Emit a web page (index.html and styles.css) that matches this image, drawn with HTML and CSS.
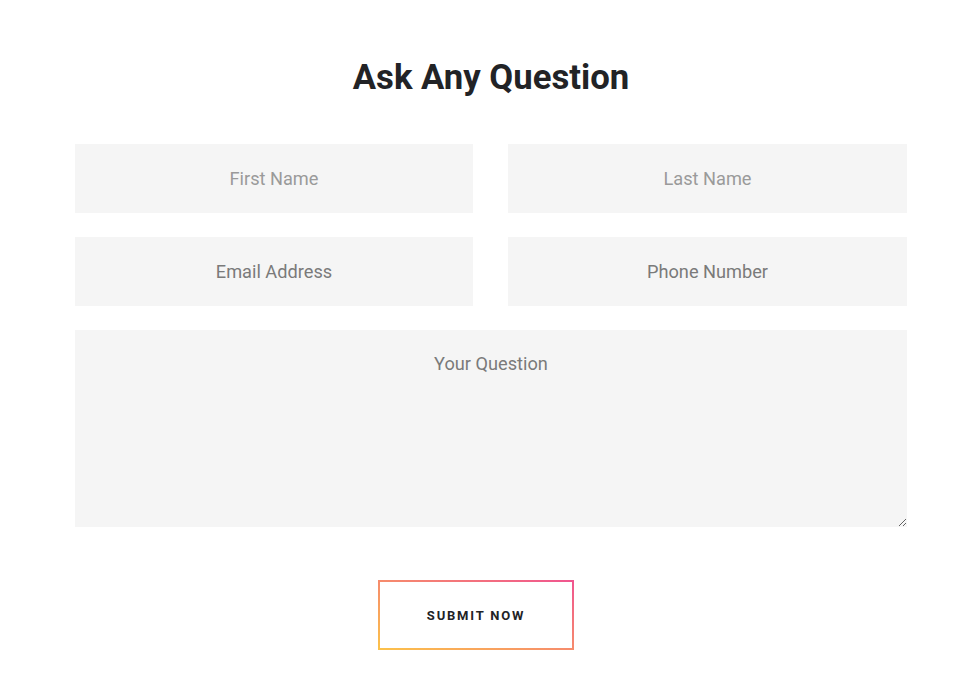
FILE: index.html
```html
<!DOCTYPE html>
<html>
<head>
<meta charset="utf-8">
<link rel="stylesheet" href="styles.css">
</head>
<body>
<section class="contact">
  <h2 class="title">Ask Any Question</h2>
  <form class="form">
    <div class="row">
      <input class="field light" type="text" placeholder="First Name">
      <input class="field light" type="text" placeholder="Last Name">
    </div>
    <div class="row">
      <input class="field" type="email" placeholder="Email Address">
      <input class="field" type="tel" placeholder="Phone Number">
    </div>
    <textarea class="field area" placeholder="Your Question"></textarea>
    <div class="actions">
      <button class="submit" type="button">SUBMIT NOW</button>
    </div>
  </form>
</section>
</body>
</html>
```
FILE: styles.css
```css
html, body {
  margin: 0;
  padding: 0;
  background: #ffffff;
  font-family: Roboto, "Liberation Sans", sans-serif;
}
.contact {
  padding: 55px 67px 0 75px;
}
.title {
  margin: 0 0 45px 0;
  text-align: center;
  font-size: 34.7px;
  font-weight: 700;
  line-height: 44px;
  color: #222326;
}
.form {
  display: flex;
  flex-direction: column;
  gap: 24px;
}
.row {
  display: grid;
  grid-template-columns: 398px 399px;
  column-gap: 35px;
}
.field {
  box-sizing: border-box;
  height: 69px;
  border: none;
  outline: none;
  background: #f5f5f5;
  font-family: Roboto, "Liberation Sans", sans-serif;
  font-size: 18.2px;
  text-align: center;
  color: #333;
  padding: 0 10px;
}
.field::placeholder {
  color: #7a7a7a;
  opacity: 1;
}
.field.light::placeholder {
  color: #9a9a9a;
}
.area {
  width: 832px;
  height: 197px;
  padding: 22px 10px 0;
  resize: vertical;
  display: block;
  line-height: 24px;
}
.actions {
  display: flex;
  padding: 29px 0 0 303px;
}
.submit {
  width: 196px;
  height: 70px;
  background: #fff;
  border: 2px solid;
  border-image: linear-gradient(to top right, #fcc24a, #f0558f) 1;
  font-family: Roboto, "Liberation Sans", sans-serif;
  font-weight: 700;
  font-size: 13px;
  letter-spacing: 1.8px;
  color: #222326;
  cursor: pointer;
  padding: 0;
}
```
